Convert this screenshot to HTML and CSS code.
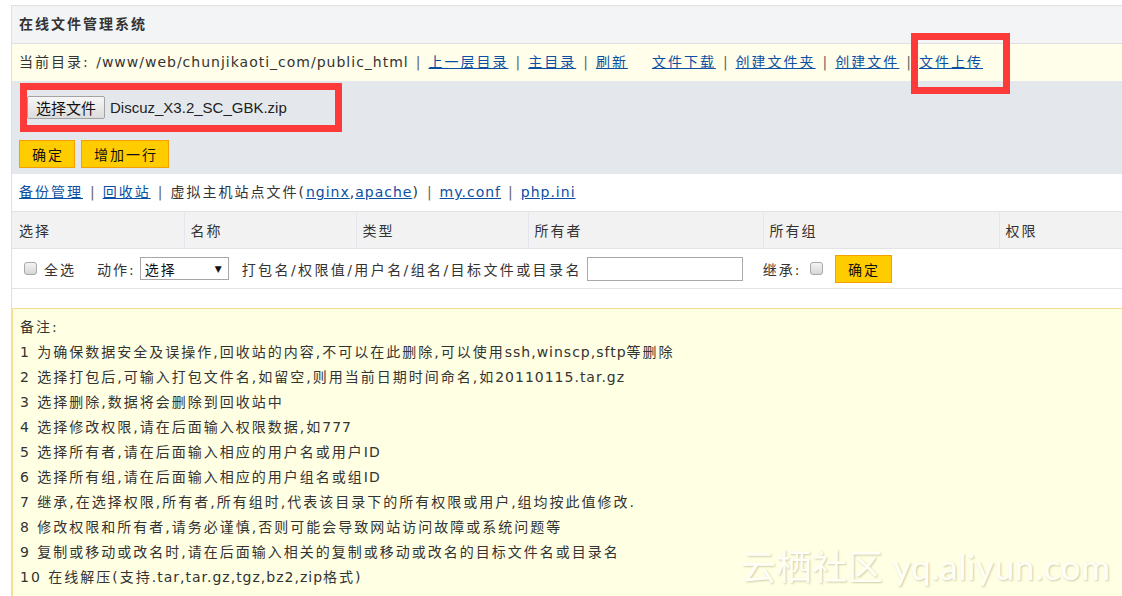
FILE: index.html
```html
<!DOCTYPE html>
<html lang="zh-CN">

<head>
    <meta charset="UTF-8">
    <title>在线文件管理系统</title>
    <link rel="stylesheet" href="styles.css">
</head>

<body>
    <div class="wrap">
        <!-- Title bar -->
        <div class="title">在线文件管理系统</div>

        <!-- Current path and tools -->
        <div class="path">
            当前目录: <span class="en">/www/web/chunjikaoti_com/public_html</span><span class="sep">|</span><a href="#">上一层目录</a><span class="sep">|</span><a href="#">主目录</a><span class="sep">|</span><a href="#">刷新</a><a href="#" class="gap">文件下载</a><span class="sep">|</span><a href="#">创建文件夹</a><span class="sep">|</span><a href="#">创建文件</a><span class="sep">|</span><a href="#">文件上传</a>
        </div>

        <!-- Upload form -->
        <div class="upload">
            <div class="mark">
                <button class="file-btn">选择文件</button>
                <span class="file-name">Discuz_X3.2_SC_GBK.zip</span>
            </div>
            <div class="actions">
                <button class="btn">确定</button>
                <button class="btn">增加一行</button>
            </div>
        </div>

        <div class="links">
            <a href="#">备份管理</a><span class="sep">|</span><a href="#">回收站</a><span class="sep">|</span>虚拟主机站点文件(<a href="#" class="en">nginx</a><span class="en">,</span><a href="#" class="en">apache</a>)<span class="sep">|</span><a href="#" class="en">my.conf</a><span class="sep">|</span><a href="#" class="en">php.ini</a>
        </div>

        <table class="files">
            <colgroup>
                <col style="width: 172px">
                <col style="width: 172px">
                <col style="width: 172px">
                <col style="width: 235px">
                <col style="width: 236px">
                <col>
            </colgroup>
            <tr>
                <th>选择</th>
                <th>名称</th>
                <th>类型</th>
                <th>所有者</th>
                <th>所有组</th>
                <th>权限</th>
            </tr>
            <tr>
                <td colspan="6">
                    <div class="action-row">
                        <span class="check"></span>
                        <span class="all">全选</span>
                        <span class="act">动作:</span>
                        <div class="select"><span>选择</span><span class="arrow">▼</span></div>
                        <span class="hint">打包名/权限值/用户名/组名/目标文件或目录名</span>
                        <input type="text" class="target">
                        <span class="inherit">继承:</span>
                        <span class="check"></span>
                        <button class="btn ok">确定</button>
                    </div>
                </td>
            </tr>
        </table>

        <!-- Notes -->
        <div class="notes">
            <p>备注:</p>
            <p>1 为确保数据安全及误操作,回收站的内容,不可以在此删除,可以使用<span class="en">ssh,winscp,sftp</span>等删除</p>
            <p>2 选择打包后,可输入打包文件名,如留空,则用当前日期时间命名,如<span class="en">20110115.tar.gz</span></p>
            <p>3 选择删除,数据将会删除到回收站中</p>
            <p>4 选择修改权限,请在后面输入权限数据,如<span class="en">777</span></p>
            <p>5 选择所有者,请在后面输入相应的用户名或用户<span class="en">ID</span></p>
            <p>6 选择所有组,请在后面输入相应的用户组名或组<span class="en">ID</span></p>
            <p>7 继承,在选择权限,所有者,所有组时,代表该目录下的所有权限或用户,组均按此值修改.</p>
            <p>8 修改权限和所有者,请务必谨慎,否则可能会导致网站访问故障或系统问题等</p>
            <p>9 复制或移动或改名时,请在后面输入相关的复制或移动或改名的目标文件名或目录名</p>
            <p>10 在线解压(支持<span class="en">.tar,tar.gz,tgz,bz2,zip</span>格式)</p>
        </div>
    </div>

    <div class="mark-up"></div>
    <div class="watermark">云栖社区 yq.aliyun.com</div>
</body>

</html>
```

FILE: styles.css
```css
body {
    margin: 0;
    padding: 0;
    font-family: "DejaVu Sans", "Noto Sans CJK SC", sans-serif;
    font-size: 14px;
    letter-spacing: 2px;
    color: #333;
    background-color: #fff;
    overflow: hidden;
}

a {
    color: #0b4fa3;
    text-decoration: underline;
}

/* latin runs are spaced tighter than the chinese text */
.en {
    letter-spacing: 1px;
}

.wrap {
    margin: 5px -60px 0 11px;
    border-top: 1px solid #e0e0e0;
    border-left: 1px solid #e0e0e0;
}

.title {
    height: 37px;
    line-height: 37px;
    padding-left: 7px;
    font-weight: bold;
    background-color: #f3f4f6;
    border-bottom: 1px solid #e0e0e0;
}

.path {
    height: 37px;
    line-height: 37px;
    padding-left: 7px;
    background-color: #fffeea;
    white-space: nowrap;
}

.sep {
    color: #666;
    letter-spacing: 0;
    padding: 0 8px 0 7px;
}

.gap {
    margin-left: 24px;
}

/* Upload area */
.upload {
    background-color: #e4e7ec;
    padding: 2px 0 6px 8px;
}

.mark {
    display: flex;
    align-items: center;
    width: 308px;
    height: 35px;
    border: 7px solid #fc3a3a;
}

.file-btn {
    height: 23px;
    padding: 0 8px;
    margin-left: 0;
    font-family: "Noto Sans CJK SC", sans-serif;
    font-size: 15px;
    line-height: 20px;
    letter-spacing: 0;
    color: #111;
    background: linear-gradient(#f7f7f7, #dcdcdc);
    border: 1px solid #a3a3a3;
    border-radius: 2px;
}

.file-name {
    margin-left: 5px;
    font-family: "Liberation Sans", Arial, sans-serif;
    font-size: 15px;
    letter-spacing: 0;
    color: #222;
}

.actions {
    display: flex;
    gap: 6px;
    margin-top: 8px;
    margin-left: -1px;
}

.btn {
    height: 28px;
    padding: 0 10px 0 12px;
    font-family: "DejaVu Sans", "Noto Sans CJK SC", sans-serif;
    font-size: 14px;
    letter-spacing: 2px;
    color: #111;
    background-color: #ffcc00;
    border: 1px solid #f5a000;
    border-radius: 0;
}

.links {
    height: 37px;
    line-height: 37px;
    padding-left: 7px;
    white-space: nowrap;
}

/* File table */
.files {
    width: 100%;
    table-layout: fixed;
    border-collapse: collapse;
}

.files th {
    height: 36px;
    padding: 0 0 0 6px;
    text-align: left;
    font-weight: normal;
    background-color: #f2f2f2;
    border-top: 1px solid #e3e3e3;
    border-bottom: 1px solid #e3e3e3;
    border-right: 1px solid #e3e6ec;
}

.files th:first-child {
    padding-left: 7px;
}

.files td {
    height: 39px;
    padding: 0;
    border-bottom: 1px solid #e3e3e3;
}

.action-row {
    display: flex;
    align-items: center;
    padding-left: 12px;
    white-space: nowrap;
}

.check {
    display: inline-block;
    width: 11px;
    height: 11px;
    border: 1px solid #a9a9a9;
    border-radius: 3px;
    background: linear-gradient(#f4f4f4, #d6d6d6);
}

.all {
    margin-left: 7px;
}

.act {
    margin-left: 21px;
}

.select {
    display: flex;
    justify-content: space-between;
    align-items: center;
    box-sizing: border-box;
    width: 89px;
    height: 23px;
    margin-left: 4px;
    padding: 0 6px 0 4px;
    border: 1px solid #a6a6a6;
    background-color: #fff;
    color: #111;
}

.arrow {
    font-size: 9px;
    letter-spacing: 0;
}

.hint {
    margin-left: 13px;
    letter-spacing: 2.4px;
}

.target {
    box-sizing: border-box;
    width: 156px;
    height: 24px;
    margin-left: 5px;
    border: 1px solid #a9a9a9;
}

.inherit {
    margin-left: 20px;
}

.inherit + .check {
    margin-left: 8px;
}

.ok {
    width: 57px;
    margin-left: 12px;
    padding: 0 8px 0 10px;
}

/* Notes */
.notes {
    margin-top: 19px;
    padding: 6px 7px 20px;
    background-color: #ffffe3;
    border-top: 1px solid #f3dc8e;
    border-left: 1px solid #f3dc8e;
}

.notes p {
    margin: 0;
    line-height: 25px;
    white-space: nowrap;
}

/* Screenshot annotation and watermark */
.mark-up {
    position: absolute;
    top: 33px;
    left: 911px;
    width: 99px;
    height: 61px;
    box-sizing: border-box;
    border: 7px solid #fc3a3a;
}

.watermark {
    position: absolute;
    top: 539px;
    left: 741px;
    font-family: Lato, "Noto Sans CJK SC", sans-serif;
    font-size: 35px;
    letter-spacing: 0.6px;
    color: #fffff8;
    text-shadow: 1px 1px 2px rgba(120, 110, 60, 0.35);
    white-space: nowrap;
}
```
